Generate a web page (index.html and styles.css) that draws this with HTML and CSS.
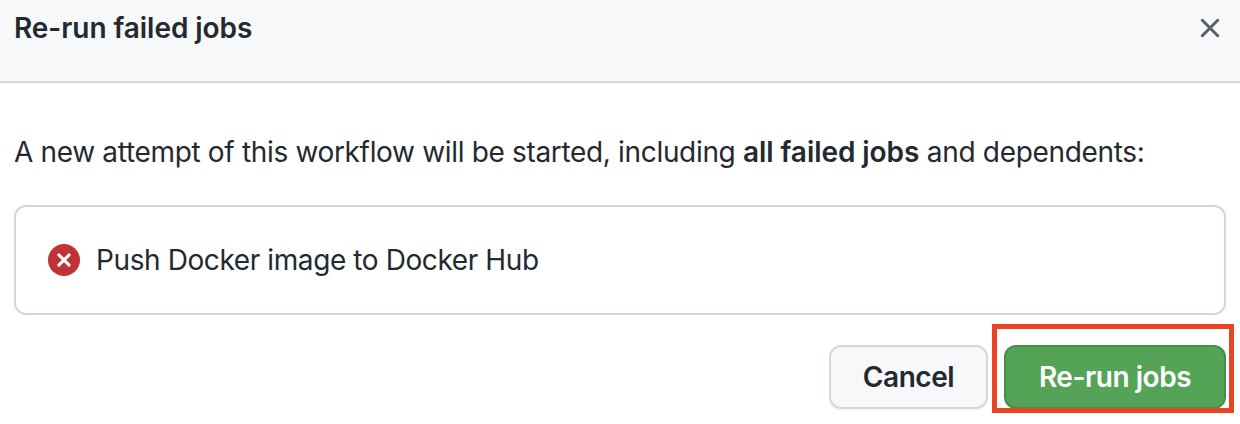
FILE: index.html
```html
<!DOCTYPE html>
<html lang="en">
<head>
<meta charset="utf-8">
<title>Re-run failed jobs</title>
<link rel="stylesheet" href="styles.css">
</head>
<body>
<main class="dialog">
  <header class="dialog-header">
    <h1 class="dialog-title">Re-run failed jobs</h1>
    <button class="close-button" aria-label="Close">
      <svg class="close-icon" viewBox="0 0 20 20"><path d="M2.3 2.3l15.4 15.4M17.7 2.3l-15.4 15.4"/></svg>
    </button>
  </header>
  <section class="dialog-body">
    <p class="message">A new attempt of this workflow will be started, including <strong class="message-strong">all failed jobs</strong> and dependents:</p>
    <div class="job">
      <svg class="job-icon" viewBox="0 0 32 32"><circle cx="16" cy="16" r="16"/><path d="M10.9 10.9l10.2 10.2M21.1 10.9l-10.2 10.2"/></svg>
      <span class="job-name">Push Docker image to Docker Hub</span>
    </div>
    <footer class="actions">
      <button class="button">Cancel</button>
      <div class="highlight"><button class="button button-primary">Re-run jobs</button></div>
    </footer>
  </section>
</main>
</body>
</html>
```
FILE: styles.css
```css
* { box-sizing: border-box; }
body { margin: 0; background: #fff; color: #24292f; font-family: Inter, "Liberation Sans", sans-serif; font-size: 28px; }
.dialog { width: 1240px; height: 424px; overflow: hidden; }
.dialog-header { display: flex; justify-content: space-between; height: 83px; padding: 8px 20px 0 14px; background: #f6f8fa; border-bottom: 2px solid #d0d7de; }
.dialog-title { margin: 0; font-size: 28px; font-weight: 600; line-height: 40px; letter-spacing: -0.06px; white-space: nowrap; }
.close-button { display: flex; align-items: center; width: 20px; height: 40px; padding: 0; border: 0; background: none; }
.close-icon { width: 20px; height: 20px; fill: none; stroke: #57606a; stroke-width: 3; stroke-linecap: round; }
.dialog-body { padding: 49px 14px 0; }
.message { margin: 0; line-height: 40px; letter-spacing: -0.33px; white-space: nowrap; }
.message-strong { font-weight: 600; letter-spacing: -0.06px; }
.job { display: flex; align-items: center; gap: 16px; height: 110px; margin-top: 33px; padding: 0 32px; border: 2px solid #d0d7de; border-radius: 12px; }
.job-icon { width: 32px; height: 32px; fill: #bf3336; }
.job-icon path { fill: none; stroke: #fff; stroke-width: 3; stroke-linecap: round; }
.job-name { line-height: 40px; letter-spacing: -0.4px; white-space: nowrap; }
.actions { display: flex; justify-content: flex-end; align-items: flex-start; gap: 4px; margin: 9px -8px 0 0; }
.actions > .button { margin-top: 21px; }
.button { display: block; width: 159px; height: 64px; padding: 0; border: 2px solid #d5d8da; border-radius: 12px; background: #f6f8fa; box-shadow: 0 2px 0 rgba(27, 31, 36, 0.04); color: #24292f; font: 600 28px Inter, "Liberation Sans", sans-serif; letter-spacing: -0.45px; white-space: nowrap; }
.highlight { position: relative; width: 242px; height: 89px; padding: 21px 0 0 12px; }
/* The frame is painted over the lower edge of the button. */
.highlight::after { content: ""; position: absolute; inset: 0; border: 5px solid #eb4325; pointer-events: none; }
.button-primary { width: 222px; border-color: #478e4b; background: #54a357; color: #fff; }
```
